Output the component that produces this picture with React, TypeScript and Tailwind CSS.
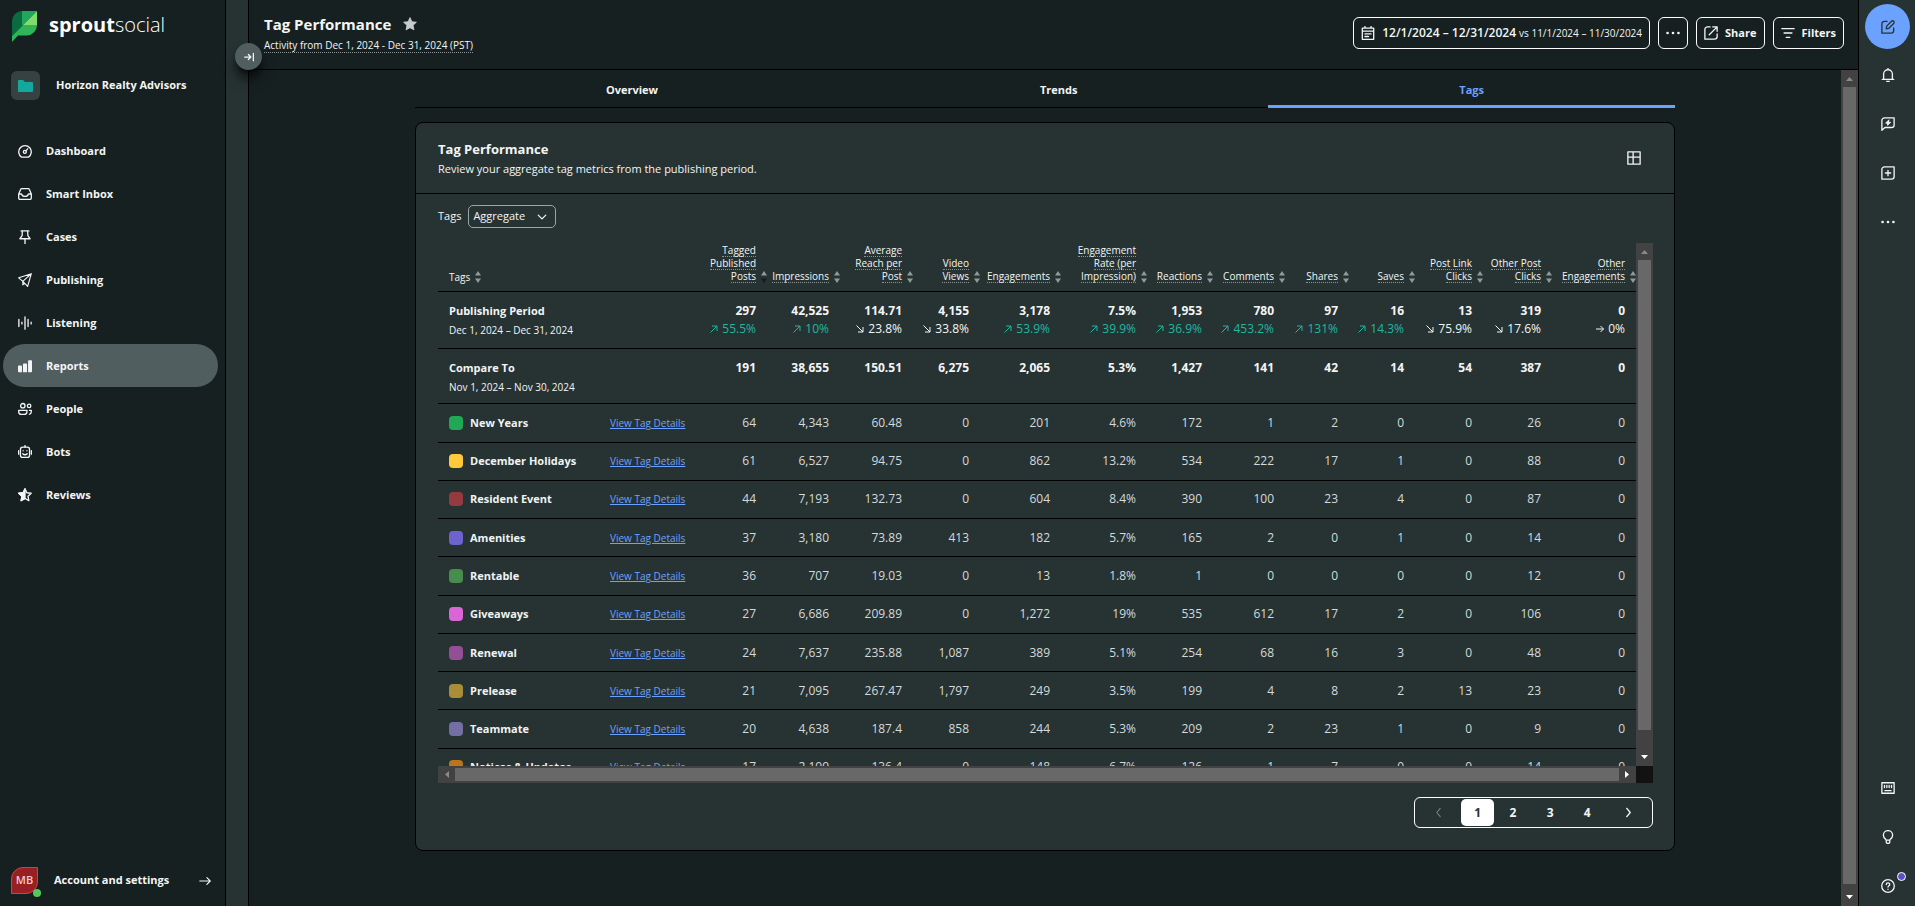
import type { ReactNode } from 'react';

type Trend = 'up' | 'down' | 'flat';

interface Metric {
  label: string[];
  width: string;
  current: string;
  trend: Trend;
  change: string;
  previous: string;
}

interface TagRow {
  name: string;
  color: string;
  values: string[];
}

const METRICS: Metric[] = [
  { label: ['Tagged', 'Published', 'Posts'], width: 'w-[72px]', current: '297', trend: 'up', change: '55.5%', previous: '191' },
  { label: ['Impressions'], width: 'w-[73px]', current: '42,525', trend: 'up', change: '10%', previous: '38,655' },
  { label: ['Average', 'Reach per', 'Post'], width: 'w-[73px]', current: '114.71', trend: 'down', change: '23.8%', previous: '150.51' },
  { label: ['Video', 'Views'], width: 'w-[67px]', current: '4,155', trend: 'down', change: '33.8%', previous: '6,275' },
  { label: ['Engagements'], width: 'w-[81px]', current: '3,178', trend: 'up', change: '53.9%', previous: '2,065' },
  { label: ['Engagement', 'Rate (per', 'Impression)'], width: 'w-[86px]', current: '7.5%', trend: 'up', change: '39.9%', previous: '5.3%' },
  { label: ['Reactions'], width: 'w-[66px]', current: '1,953', trend: 'up', change: '36.9%', previous: '1,427' },
  { label: ['Comments'], width: 'w-[72px]', current: '780', trend: 'up', change: '453.2%', previous: '141' },
  { label: ['Shares'], width: 'w-[64px]', current: '97', trend: 'up', change: '131%', previous: '42' },
  { label: ['Saves'], width: 'w-[66px]', current: '16', trend: 'up', change: '14.3%', previous: '14' },
  { label: ['Post Link', 'Clicks'], width: 'w-[68px]', current: '13', trend: 'down', change: '75.9%', previous: '54' },
  { label: ['Other Post', 'Clicks'], width: 'w-[69px]', current: '319', trend: 'down', change: '17.6%', previous: '387' },
  { label: ['Other', 'Engagements'], width: 'w-[84px]', current: '0', trend: 'flat', change: '0%', previous: '0' },
];

const TAGS: TagRow[] = [
  { name: 'New Years', color: 'bg-[#1fa855]', values: ['64', '4,343', '60.48', '0', '201', '4.6%', '172', '1', '2', '0', '0', '26', '0'] },
  { name: 'December Holidays', color: 'bg-[#ffc93c]', values: ['61', '6,527', '94.75', '0', '862', '13.2%', '534', '222', '17', '1', '0', '88', '0'] },
  { name: 'Resident Event', color: 'bg-[#953b40]', values: ['44', '7,193', '132.73', '0', '604', '8.4%', '390', '100', '23', '4', '0', '87', '0'] },
  { name: 'Amenities', color: 'bg-[#6e62cf]', values: ['37', '3,180', '73.89', '413', '182', '5.7%', '165', '2', '0', '1', '0', '14', '0'] },
  { name: 'Rentable', color: 'bg-[#478d4e]', values: ['36', '707', '19.03', '0', '13', '1.8%', '1', '0', '0', '0', '0', '12', '0'] },
  { name: 'Giveaways', color: 'bg-[#da65d6]', values: ['27', '6,686', '209.89', '0', '1,272', '19%', '535', '612', '17', '2', '0', '106', '0'] },
  { name: 'Renewal', color: 'bg-[#934f95]', values: ['24', '7,637', '235.88', '1,087', '389', '5.1%', '254', '68', '16', '3', '0', '48', '0'] },
  { name: 'Prelease', color: 'bg-[#a88e36]', values: ['21', '7,095', '267.47', '1,797', '249', '3.5%', '199', '4', '8', '2', '13', '23', '0'] },
  { name: 'Teammate', color: 'bg-[#736fa5]', values: ['20', '4,638', '187.4', '858', '244', '5.3%', '209', '2', '23', '1', '0', '9', '0'] },
  { name: 'Notices & Updates', color: 'bg-[#bd741c]', values: ['17', '2,199', '136.4', '0', '148', '6.7%', '126', '1', '7', '0', '0', '14', '0'] },
];

function Svg({ children, className = 'size-[14px]' }: { children: ReactNode; className?: string }) {
  return (
    <svg
      viewBox="0 0 16 16"
      className={`shrink-0 ${className}`}
      fill="none"
      stroke="currentColor"
      strokeWidth="1.5"
      strokeLinecap="round"
      strokeLinejoin="round"
      aria-hidden="true"
    >
      {children}
    </svg>
  );
}

const GaugeIcon = () => (
  <Svg>
    <path d="M4 15h8a7.200 7.200 0 1 0-8 0Z" />
    <circle cx="7.800" cy="9" r="1.700" />
    <path d="m9 7.800 2-2.300" />
  </Svg>
);

const InboxIcon = () => (
  <Svg>
    <path d="M.8 8 3 2.800a1.500 1.500 0 0 1 1.400-1h7.200a1.500 1.500 0 0 1 1.400 1L15.200 8v4.700a1.500 1.500 0 0 1-1.500 1.500H2.300a1.500 1.500 0 0 1-1.500-1.500ZM.8 8H4c.6 2 2 2.800 4 2.800s3.400-.8 4-2.800h3.200" />
  </Svg>
);

const PinIcon = () => (
  <Svg>
    <path d="M3.500 1h9M5 1l-.3 5.500L2.200 10h11.600l-2.500-3.500L11 1M8 10v5.500" />
  </Svg>
);

const PlaneIcon = () => (
  <Svg>
    <path strokeWidth="1.300" d="M15.200.8.800 5.500l4.700 4 5.500 5.700ZM15.200.8 5.500 9.500v4l2.300-1.700" />
  </Svg>
);

const WaveIcon = () => (
  <Svg>
    <path d="M1 4v8M4.500 7v2M8 1v14M11.500 4v8M15 7v2" />
  </Svg>
);

const BarsIcon = () => (
  <Svg>
    <path fill="currentColor" stroke="none" d="M0 8.500a1 1 0 0 1 1-1h2.500a1 1 0 0 1 1 1V15H1a1 1 0 0 1-1-1ZM5.700 6a1 1 0 0 1 1-1h2.600a1 1 0 0 1 1 1v9H5.700ZM11.500 2.500a1 1 0 0 1 1-1H15a1 1 0 0 1 1 1V14a1 1 0 0 1-1 1h-3.500Z" />
  </Svg>
);

const PeopleIcon = () => (
  <Svg>
    <circle cx="5.500" cy="4.200" r="2.500" />
    <circle cx="12.700" cy="4.500" r="2" />
    <path d="M.8 9.500h9.400V11a3.200 3.200 0 0 1-3.200 3.200H4A3.200 3.200 0 0 1 .8 11ZM13 9.500h2.200V11a3.200 3.200 0 0 1-2.200 3" />
  </Svg>
);

const BotIcon = () => (
  <Svg>
    <rect x="2.800" y="2.500" width="10.400" height="11.700" rx="2.500" />
    <path d="M8 .5v2M.7 6.500v4M15.300 6.500v4M5.500 10c1.400 1.500 3.600 1.500 5 0M5.800 6.500v.2M10.200 6.500v.2" />
  </Svg>
);

const HalfStarIcon = () => (
  <Svg>
    <path d="m8 1 2.100 4.400 5 .6-3.700 3.400 1 5L8 12l-4.400 2.400 1-5L.9 6l5-.6Z" />
    <path fill="currentColor" d="M8 1v11l-4.400 2.400 1-5L.9 6l5-.6Z" />
  </Svg>
);

const DotsIcon = () => (
  <Svg>
    <g fill="currentColor" stroke="none">
      <circle cx="1.800" cy="8" r="1.500" />
      <circle cx="8" cy="8" r="1.500" />
      <circle cx="14.200" cy="8" r="1.500" />
    </g>
  </Svg>
);

const NAV: { label: string; icon: ReactNode; active?: boolean }[] = [
  { label: 'Dashboard', icon: <GaugeIcon /> },
  { label: 'Smart Inbox', icon: <InboxIcon /> },
  { label: 'Cases', icon: <PinIcon /> },
  { label: 'Publishing', icon: <PlaneIcon /> },
  { label: 'Listening', icon: <WaveIcon /> },
  { label: 'Reports', icon: <BarsIcon />, active: true },
  { label: 'People', icon: <PeopleIcon /> },
  { label: 'Bots', icon: <BotIcon /> },
  { label: 'Reviews', icon: <HalfStarIcon /> },
];

function Sidebar() {
  return (
    <aside className="flex w-[226px] shrink-0 flex-col border-r border-black">
      <div className="flex items-center gap-3 px-3 pt-[11px]">
        <svg viewBox="0 0 25 31" className="h-[31px] w-[25px]" aria-hidden="true">
          <path fill="#0b6b40" d="M0 25V10A10 10 0 0 1 10 0v15Z" />
          <path fill="#21a65b" d="M10 0h15L10 15Z" />
          <path fill="#7fdc6c" d="M25 0v14H11Z" />
          <path fill="#2fb457" d="M11 14h14a10.500 10.500 0 0 1-10 10.500H6L0 31v-6Z" />
        </svg>
        <span className="pb-[3px] text-[20px] leading-6 text-white">
          <b className="font-bold">sprout</b>
          <span className="font-light">social</span>
        </span>
      </div>

      <div className="mt-[29px] flex items-center gap-4 px-[11px]">
        <span className="flex size-[29px] items-center justify-center rounded-md bg-[#364141]">
          <svg viewBox="0 0 15 12" className="h-3 w-[15px]" aria-hidden="true">
            <path fill="#14a79d" d="M0 1a1 1 0 0 1 1-1h4l2 2h7a1 1 0 0 1 1 1v8a1 1 0 0 1-1 1H1a1 1 0 0 1-1-1Z" />
          </svg>
        </span>
        <span className="text-[11px] font-bold">Horizon Realty Advisors</span>
      </div>

      <nav className="mt-[29px] flex flex-col pr-[7px] pl-[3px]">
        {NAV.map((item) => (
          <a
            key={item.label}
            href="#"
            className={`flex h-[43px] items-center gap-[14px] rounded-full pt-px pl-[15px] text-[11px] font-bold ${item.active ? 'bg-[#515e5f]' : ''}`}
          >
            {item.icon}
            {item.label}
          </a>
        ))}
      </nav>

      <a href="#" className="mt-auto mb-[12px] flex items-center px-[11px] text-[11px] font-bold">
        <span className="relative flex size-[27px] items-center justify-center rounded-tl-xl rounded-br-xl border border-[#d93f3f] bg-[#981f22] font-semibold text-[#f3c9c9]">
          MB
          <span className="absolute -right-1 -bottom-1 size-2 rounded-full bg-[#55c85a]" />
        </span>
        <span className="ml-4">Account and settings</span>
        <Svg className="ml-auto mr-[3px] size-3">
          <path d="M1 8h14M10.500 3.500 15 8l-4.500 4.500" />
        </Svg>
      </a>
    </aside>
  );
}

function Header() {
  return (
    <header className="flex h-[70px] shrink-0 items-start justify-between border-b border-black pr-[14px] pl-[15px]">
      <div className="pt-3">
        <div className="flex items-center gap-3">
          <h1 className="text-[15px] leading-6 font-bold">Tag Performance</h1>
          <svg viewBox="0 0 16 16" className="size-[14px] text-[#c8cccc]" fill="currentColor" stroke="currentColor" strokeLinejoin="round" aria-hidden="true">
            <path d="m8 .7 2.100 4.700 5.200.6-3.800 3.500 1 5.200L8 12.200l-4.500 2.500 1-5.200L.7 6l5.200-.6Z" />
          </svg>
        </div>
        <p className="mt-[2px] w-fit border-b border-dotted border-[#8a9494] text-[10px] leading-[14px]">
          Activity from Dec 1, 2024 - Dec 31, 2024 (PST)
        </p>
      </div>

      <div className="flex gap-2 pt-[17px]">
        <button className="flex h-8 items-center rounded-md border border-white px-[7px] whitespace-nowrap">
          <Svg className="mr-[7px] size-[14px]">
            <path d="M1.500 2.500h13v12.700h-13ZM1.500 5.800h13M4.500.5v2M11.500.5v2M4.500 9h7M4.500 12h4" />
          </Svg>
          <span className="text-xs font-semibold">12/1/2024 – 12/31/2024</span>
          <span className="ml-[3px] text-[10px]">vs 11/1/2024 – 11/30/2024</span>
        </button>
        <button aria-label="More" className="flex h-8 w-[30px] items-center justify-center rounded-md border border-white">
          <DotsIcon />
        </button>
        <button className="flex h-8 items-center gap-[7px] rounded-md border border-white px-[7px] text-[11px] font-bold">
          <Svg>
            <path d="M7 1H4a3 3 0 0 0-3 3v11h11a3 3 0 0 0 3-3V9M10 1h5v5M15 1 6 10" />
          </Svg>
          Share
        </button>
        <button className="flex h-8 items-center gap-[7px] rounded-md border border-white px-[7px] text-[11px] font-bold">
          <Svg>
            <path d="M1 3h14M3.500 8h9M6 13h4" />
          </Svg>
          Filters
        </button>
      </div>
    </header>
  );
}

function SortIcon({ active = false }: { active?: boolean }) {
  return (
    <svg viewBox="0 0 6 12" className="h-3 w-[6px] shrink-0 text-[#8f9a9a]" fill="currentColor" aria-hidden="true">
      <path d="m3 0 3 4.500H0Z" />
      <path d="m3 12 3-4.500H0Z" fill={active ? '#151c1c' : 'currentColor'} />
    </svg>
  );
}

function TrendValue({ trend, change }: { trend: Trend; change: string }) {
  return (
    <span className={`flex items-center justify-end gap-1 ${trend === 'up' ? 'text-[#1eb8a0]' : ''}`}>
      <svg viewBox="0 0 8 8" className="size-2" fill="none" stroke="currentColor" aria-hidden="true">
        {trend === 'up' && <path d="M.5 7.500 7 1M2 1h5v5" />}
        {trend === 'down' && <path d="M.5.500 7 7M7 2v5H2" />}
        {trend === 'flat' && <path d="M0 4h7.500M4.500 1l3 3-3 3" />}
      </svg>
      {change}
    </span>
  );
}

function TagTable() {
  return (
    <table className="h-[544px] w-[1203px] table-fixed border-collapse text-right text-xs leading-4">
      <thead>
        <tr className="h-[48px] border-b border-black align-bottom text-[10px] leading-3">
          <th className="w-[172px] pb-2 pl-[11px] text-left font-normal">
            <button className="flex items-center gap-[5px]">
              Tags <SortIcon />
            </button>
          </th>
          <th className="w-[90px]" aria-label="Details" />
          {METRICS.map((m, i) => (
            <th key={m.label.join(' ')} className={`${m.width} pb-2 font-normal`}>
              <button className="ml-auto flex items-end gap-[5px] pr-[5px] text-right">
                <span className="flex flex-col items-end">
                  {m.label.map((line) => (
                    <span key={line} className="h-[13px] border-b border-dotted border-[#8a9494]">
                      {line}
                    </span>
                  ))}
                </span>
                <SortIcon active={i === 0} />
              </button>
            </th>
          ))}
        </tr>
      </thead>
      <tbody>
        <tr className="h-[57px] border-b border-black align-top">
          <th colSpan={2} className="pt-[11px] pl-[11px] text-left text-[11px] font-bold">
            Publishing Period
            <span className="block pt-[3px] text-[10px] font-normal">Dec 1, 2024 – Dec 31, 2024</span>
          </th>
          {METRICS.map((m) => (
            <td key={m.label.join(' ')} className="pt-[11px] pr-4">
              <span className="block pb-[2px] font-bold">{m.current}</span>
              <TrendValue trend={m.trend} change={m.change} />
            </td>
          ))}
        </tr>
        <tr className="h-[55px] border-b border-black align-top">
          <th colSpan={2} className="pt-[11px] pl-[11px] text-left text-[11px] font-bold">
            Compare To
            <span className="block pt-[3px] text-[10px] font-normal">Nov 1, 2024 – Nov 30, 2024</span>
          </th>
          {METRICS.map((m) => (
            <td key={m.label.join(' ')} className="pt-[11px] pr-4 font-bold">
              {m.previous}
            </td>
          ))}
        </tr>
        {TAGS.map((tag) => (
          <tr key={tag.name} className="h-[38px] border-b border-black text-[#d5dada]">
            <th className="pl-[11px] text-left text-[11px] font-bold text-[#f0f3f3]">
              <span className="flex items-center gap-[7px] whitespace-nowrap">
                <span className={`size-[14px] rounded ${tag.color}`} />
                {tag.name}
              </span>
            </th>
            <td className="text-left">
              <a href="#" className="text-[10px] whitespace-nowrap text-[#6ba2ff] underline">
                View Tag Details
              </a>
            </td>
            {tag.values.map((value, i) => (
              <td key={METRICS[i].label.join(' ')} className="pr-4">
                {value}
              </td>
            ))}
          </tr>
        ))}
      </tbody>
    </table>
  );
}

function Arrow({ d, className }: { d: string; className: string }) {
  return (
    <svg viewBox="0 0 17 17" className={`size-[17px] shrink-0 ${className}`} fill="currentColor" aria-hidden="true">
      <path d={d} />
    </svg>
  );
}

function VerticalScrollbar({ thumb }: { thumb: string }) {
  return (
    <div className="flex w-[17px] shrink-0 flex-col bg-[#424242]">
      <Arrow d="M5 11h7L8.500 7Z" className="text-[#8a8a8a]" />
      <div className="flex-1 px-[2px]">
        <div className={`bg-[#686868] ${thumb}`} />
      </div>
      <Arrow d="M5 6h7l-3.500 4Z" className="text-white" />
    </div>
  );
}

function Pagination() {
  return (
    <nav
      aria-label="Pages"
      className="ml-auto mt-[14px] flex h-[31px] w-[239px] items-center justify-between rounded-md border border-white px-px text-xs font-bold"
    >
      <button aria-label="Previous page" disabled className="flex w-[45px] justify-center text-[#7b8585]">
        <Svg className="size-[11px]">
          <path d="m10.500 2-5 6 5 6" />
        </Svg>
      </button>
      <button className="h-[27px] w-[33px] rounded-[5px] bg-white text-[#273333]">1</button>
      <button className="w-[37px]">2</button>
      <button className="w-[37px]">3</button>
      <button className="w-[37px]">4</button>
      <button aria-label="Next page" className="flex w-[45px] justify-center">
        <Svg className="size-[11px]">
          <path strokeWidth="2" d="m5.500 2 5 6-5 6" />
        </Svg>
      </button>
    </nav>
  );
}

function ReportCard() {
  return (
    <section className="mt-[14px] rounded-lg border border-black bg-[#273333]">
      <div className="flex h-[71px] items-center justify-between border-b border-black pr-[33px] pl-[22px]">
        <div className="pt-px">
          <h2 className="text-[13px] leading-5 font-bold">Tag Performance</h2>
          <p className="text-[11px] leading-5">Review your aggregate tag metrics from the publishing period.</p>
        </div>
        <button aria-label="Table view">
          <Svg>
            <path d="M1 1h14v14H1ZM1 7h14M7 1v14" />
          </Svg>
        </button>
      </div>

      <div className="pt-[11px] pr-[21px] pb-[22px] pl-[22px]">
        <div className="flex items-center gap-[7px] text-[11px]">
          <label htmlFor="tag-mode">Tags</label>
          <span className="relative">
            <select
              id="tag-mode"
              className="h-[23px] w-[88px] appearance-none rounded-[5px] border border-[#9aa5a5] bg-transparent pl-1"
            >
              <option>Aggregate</option>
            </select>
            <Svg className="pointer-events-none absolute top-[7px] right-[9px] size-[10px]">
              <path strokeWidth="2" d="m2 5 6 6 6-6" />
            </Svg>
          </span>
        </div>

        <div className="mt-[15px] flex h-[523px]">
          <div className="min-w-0 flex-1 overflow-hidden">
            <TagTable />
          </div>
          <VerticalScrollbar thumb="h-[470px]" />
        </div>
        <div className="flex h-[17px]">
          <div className="flex flex-1 bg-[#424242]">
            <Arrow d="M11 5v7L7 8.500Z" className="text-[#8a8a8a]" />
            <div className="my-[2px] flex-1 bg-[#686868]" />
            <Arrow d="M6 5v7l4-3.500Z" className="text-white" />
          </div>
          <div className="w-[17px] bg-[#121212]" />
        </div>

        <Pagination />
      </div>
    </section>
  );
}

function Rail() {
  return (
    <aside className="flex w-[57px] shrink-0 flex-col items-center border-l border-black bg-[#273333] pt-1 pb-[13px] pl-px">
      <button aria-label="Compose" className="flex size-[45px] items-center justify-center rounded-full bg-[#6ba2ff] text-[#273333]">
        <Svg>
          <path d="M7 1.500H4a3 3 0 0 0-3 3V15h10.500a3 3 0 0 0 3-3V9M6 10l.5-3L12 1.500a1.600 1.600 0 0 1 2.500 2.500L9 9.500Z" />
        </Svg>
      </button>
      <div className="mt-[19px] flex flex-col gap-[35px]">
        <Svg>
          <path d="M8 .5v1M1.500 13h13M3 13V7a5 5 0 0 1 10 0v6M6.500 15.200h3" />
        </Svg>
        <Svg>
          <path d="M1 15.200V4a3 3 0 0 1 3-3h11v8a3 3 0 0 1-3 3H4.500Z" />
          <path fill="currentColor" strokeWidth="1" d="M8.800 3.500 5.300 7H7.500v2.500L11 6H8.800Z" />
        </Svg>
        <Svg>
          <path d="M1 4a3 3 0 0 1 3-3h11v11a3 3 0 0 1-3 3H1ZM8 5v6M5 8h6" />
        </Svg>
        <DotsIcon />
      </div>
      <div className="mt-auto flex flex-col gap-[35px]">
        <Svg>
          <path d="M1 2h14v12H1ZM4 5v2.500M6.700 5v2.500M9.300 5v2.500M12 5v2.500M4.500 11h7" />
        </Svg>
        <Svg>
          <path d="M6 11.500C4 10 2.700 8.400 2.700 6a5.300 5.300 0 0 1 10.600 0c0 2.400-1.300 4-3.300 5.500ZM6 11.500V14l1 1.300h2l1-1.300v-2.500" />
        </Svg>
        <span className="relative">
          <Svg>
            <circle cx="8" cy="8" r="7.200" />
            <path d="M6 6.300C6 3.700 10 3.700 10 6.200c0 1.500-2 1.500-2 3M8 11.700v.1" />
          </Svg>
          <span className="absolute -top-[7px] -right-[11px] size-[9px] rounded-full border border-white bg-[#5b50c8]" />
        </span>
      </div>
    </aside>
  );
}

const TABS = ['Overview', 'Trends', 'Tags'];

export default function App() {
  return (
    <div className="flex h-screen overflow-hidden bg-[#172021] font-['Open_Sans','Noto_Sans',sans-serif] text-[#f3f5f5]">
      <Sidebar />
      <div className="relative w-[23px] shrink-0 border-r border-black bg-[#273333]">
        <button
          aria-label="Expand sidebar"
          className="absolute top-[43px] left-[9px] z-10 flex size-[27px] items-center justify-center rounded-full bg-[#515e5f] shadow-lg shadow-black"
        >
          <Svg className="size-[10px]">
            <path strokeWidth="2" d="M1 8h10M7 4l4 4-4 4M15 2v12" />
          </Svg>
        </button>
      </div>
      <div className="flex min-w-0 flex-1 flex-col">
        <Header />
        <div className="flex min-h-0 flex-1">
          <main className="min-w-0 flex-1 overflow-hidden">
            <div className="mx-auto max-w-[1260px]">
              <div role="tablist" className="flex h-[38px]">
                {TABS.map((tab) => (
                  <button
                    key={tab}
                    role="tab"
                    aria-selected={tab === 'Tags'}
                    className={`flex-auto text-[11px] font-bold ${tab === 'Tags' ? 'border-b-3 border-[#6ba2ff] pt-[5px] text-[#6ba2ff]' : 'border-b border-black pt-[3px]'}`}
                  >
                    {tab}
                  </button>
                ))}
              </div>
              <ReportCard />
            </div>
          </main>
          <VerticalScrollbar thumb="h-[797px]" />
        </div>
      </div>
      <Rail />
    </div>
  );
}
